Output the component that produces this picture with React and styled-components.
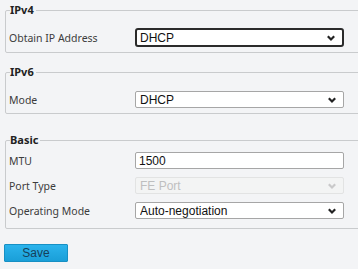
import styled, { createGlobalStyle } from "styled-components";

const GlobalStyle = createGlobalStyle`
  html, body {
    margin: 0;
    background: #f3f4f6;
  }
  body {
    font-family: "Noto Sans", "Liberation Sans", Arial, sans-serif;
    color: #333;
  }
`;

const Page = styled.div`
  width: 100%;
  overflow: hidden;
  padding: 0 0 0 5px;
  box-sizing: border-box;
  display: flex;
  flex-direction: column;
`;

const Group = styled.fieldset`
  margin: ${(p) => p.$top || 0}px -14px 0 0;
  padding: ${(p) => p.$pt || 10}px 0 ${(p) => p.$pb || 6}px 3px;
  border: 1px solid #c9cbcd;
  border-radius: 2px;
  display: flex;
  flex-direction: column;
  gap: 8px;
`;

const Legend = styled.legend`
  padding: 0 2px 0 0;
  margin-left: 1px;
  font-size: 11px;
  font-weight: 700;
  color: #222;
  line-height: 12px;
`;

const Row = styled.div`
  display: flex;
  align-items: center;
`;

const Label = styled.span`
  width: 126px;
  font-size: 10.5px;
  color: #3c3c3c;
`;

const chevron = (color) =>
  `url("data:image/svg+xml,%3Csvg xmlns='http://www.w3.org/2000/svg' width='10' height='8' viewBox='0 0 10 8'%3E%3Cpath d='M1.8 2.3 L5 5.5 L8.2 2.3' fill='none' stroke='${color}' stroke-width='2.2'/%3E%3C/svg%3E")`;

const Select = styled.select`
  appearance: none;
  box-sizing: border-box;
  width: 209px;
  height: ${(p) => (p.$focus ? 19 : 17)}px;
  padding: 0 18px 0 ${(p) => (p.$focus ? 3 : 4)}px;
  font-family: "Liberation Sans", Arial, sans-serif;
  font-size: 12px;
  color: ${(p) => (p.disabled ? "#a9a9a9" : "#111")};
  background: ${(p) => (p.disabled ? "#f4f4f4" : "#fff")}
    ${(p) => chevron(p.disabled ? "%23b8b8b8" : "%23222")} no-repeat right 6px
    center;
  border: ${(p) =>
    p.$focus
      ? "2px solid #2b2b2b"
      : p.disabled
      ? "1px solid #dcdcdc"
      : "1px solid #a6a6a6"};
  border-radius: ${(p) => (p.$focus ? 3 : 2)}px;
  outline: none;
`;

const Input = styled.input`
  box-sizing: border-box;
  width: 209px;
  height: 17px;
  padding: 0 3px;
  font-family: "Liberation Sans", Arial, sans-serif;
  font-size: 12px;
  color: #111;
  background: #fff;
  border: 1px solid #a6a6a6;
  border-radius: 2px;
  outline: none;
`;

const SaveButton = styled.button`
  margin-top: 15px;
  margin-left: -1px;
  width: 64px;
  height: 18px;
  padding: 0;
  border: 1px solid #1790c4;
  border-radius: 1px;
  background: linear-gradient(#2bb3ec, #1a9fd8);
  font-family: "Liberation Sans", Arial, sans-serif;
  font-size: 12px;
  color: #16405a;
`;

export default function App() {
  return (
    <>
      <GlobalStyle />
      <Page>
        <Group $top={4} $pt={12} $pb={5}>
          <Legend>IPv4</Legend>
          <Row>
            <Label>Obtain IP Address</Label>
            <Select $focus defaultValue="DHCP">
              <option>DHCP</option>
            </Select>
          </Row>
        </Group>

        <Group $top={13} $pt={13} $pb={5}>
          <Legend>IPv6</Legend>
          <Row>
            <Label>Mode</Label>
            <Select defaultValue="DHCP">
              <option>DHCP</option>
            </Select>
          </Row>
        </Group>

        <Group $top={20} $pt={6} $pb={9}>
          <Legend>Basic</Legend>
          <Row>
            <Label>MTU</Label>
            <Input defaultValue="1500" />
          </Row>
          <Row>
            <Label>Port Type</Label>
            <Select disabled defaultValue="FE Port">
              <option>FE Port</option>
            </Select>
          </Row>
          <Row>
            <Label>Operating Mode</Label>
            <Select defaultValue="Auto-negotiation">
              <option>Auto-negotiation</option>
            </Select>
          </Row>
        </Group>

        <div>
          <SaveButton>Save</SaveButton>
        </div>
      </Page>
    </>
  );
}
